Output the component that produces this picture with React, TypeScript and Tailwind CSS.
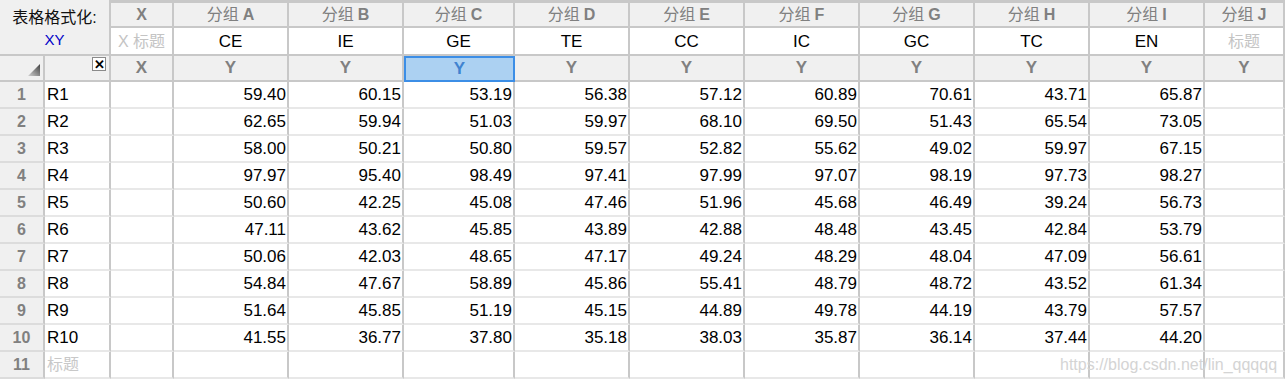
import React from "react";

const groups = ["A", "B", "C", "D", "E", "F", "G", "H", "I"];
const titles = ["CE", "IE", "GE", "TE", "CC", "IC", "GC", "TC", "EN"];

const data = [
  ["59.40", "60.15", "53.19", "56.38", "57.12", "60.89", "70.61", "43.71", "65.87"],
  ["62.65", "59.94", "51.03", "59.97", "68.10", "69.50", "51.43", "65.54", "73.05"],
  ["58.00", "50.21", "50.80", "59.57", "52.82", "55.62", "49.02", "59.97", "67.15"],
  ["97.97", "95.40", "98.49", "97.41", "97.99", "97.07", "98.19", "97.73", "98.27"],
  ["50.60", "42.25", "45.08", "47.46", "51.96", "45.68", "46.49", "39.24", "56.73"],
  ["47.11", "43.62", "45.85", "43.89", "42.88", "48.48", "43.45", "42.84", "53.79"],
  ["50.06", "42.03", "48.65", "47.17", "49.24", "48.29", "48.04", "47.09", "56.61"],
  ["54.84", "47.67", "58.89", "45.86", "55.41", "48.79", "48.72", "43.52", "61.34"],
  ["51.64", "45.85", "51.19", "45.15", "44.89", "49.78", "44.19", "43.79", "57.57"],
  ["41.55", "36.77", "37.80", "35.18", "38.03", "35.87", "36.14", "37.44", "44.20"],
];

const font = { fontFamily: '"Liberation Sans", "Noto Sans CJK SC", Arial, sans-serif' };

const head = "bg-[#f0f0f0] border-r-2 border-b-2 border-[#c8c8c8] flex items-center justify-center";
const cell = "border-r-2 border-b-2 border-r-[#c8c8c8] border-b-[#e8e8e8] flex items-center";

function Corner() {
  return (
    <svg width="12" height="12" viewBox="0 0 12 12" className="absolute right-[3px] bottom-[4px]">
      <defs>
        <linearGradient id="tri" x1="0" y1="1" x2="1" y2="0">
          <stop offset="0" stopColor="#d0d0d0" />
          <stop offset="1" stopColor="#404040" />
        </linearGradient>
      </defs>
      <polygon points="12,0 12,12 0,12" fill="url(#tri)" />
    </svg>
  );
}

export default function App() {
  return (
    <div className="relative w-[1285px] h-[379px] overflow-hidden bg-white" style={font}>
      <div className="grid grid-cols-[45px_66px_63px_115px_115px_111px_115px_115px_115px_115px_115px_115px_80px] grid-rows-[28px_28px_26px_repeat(11,27px)]">
        {/* table format */}
        <div className="col-span-2 row-span-2 bg-[#f0f0f0] border-r-2 border-b-2 border-[#c8c8c8] flex flex-col items-center pt-[8px]">
          <span className="text-[16px] leading-[20px] text-[#111]">表格格式化:</span>
          <span className="text-[15px] leading-[18px] text-[#0000c8] mt-[3px]">XY</span>
        </div>

        {/* row 1: group titles */}
        <div className={`${head} border-t-[3px] text-[16px] font-bold text-[#808080]`}>X</div>
        {groups.map((g) => (
          <div key={g} className={`${head} border-t-[3px] text-[16px] text-[#808080]`}>
            分组 <span className="font-bold ml-[4px]">{g}</span>
          </div>
        ))}
        <div className={`${head} border-t-[3px] text-[16px] text-[#808080]`}>
          分组 <span className="font-bold ml-[4px]">J</span>
        </div>

        {/* row 2: column titles */}
        <div className="border-r-2 border-b-2 border-[#c8c8c8] bg-white flex items-center justify-center pt-[2px] text-[16px] text-[#c4c4c4]">X 标题</div>
        {titles.map((t) => (
          <div key={t} className="border-r-2 border-b-2 border-[#c8c8c8] bg-white flex items-center justify-center pt-[2px] text-[17px] text-black">
            {t}
          </div>
        ))}
        <div className="border-r-2 border-b-2 border-[#c8c8c8] bg-white flex items-center justify-center pt-[2px] text-[16px] text-[#c4c4c4]">标题</div>

        {/* row 3: X / Y */}
        <div className={`${head} relative`}>
          <Corner />
        </div>
        <div className={`${head} relative`}>
          <div className="absolute right-[3px] top-[1px] w-[14px] h-[14px] border border-[#8a8a8a] bg-white flex items-center justify-center">
            <span className="text-[13px] leading-none font-bold text-black">✕</span>
          </div>
        </div>
        <div className={`${head} text-[17px] font-bold text-[#808080]`}>X</div>
        {groups.map((g) =>
          g === "C" ? (
            <div key={g} className="bg-[#acd1f2] border-2 border-[#3c8ee6] flex items-center justify-center text-[17px] font-bold text-[#3f83d0]">
              Y
            </div>
          ) : (
            <div key={g} className={`${head} text-[17px] font-bold text-[#808080]`}>Y</div>
          )
        )}
        <div className={`${head} text-[17px] font-bold text-[#808080]`}>Y</div>

        {/* data rows */}
        {data.map((row, i) => (
          <React.Fragment key={i}>
            <div className="bg-[#f0f0f0] border-r-2 border-b-2 border-r-[#c8c8c8] border-b-[#dcdcdc] flex items-center justify-center text-[16px] font-bold text-[#808080]">
              {i + 1}
            </div>
            <div className={`${cell} pl-[2px] text-[17px] text-black`}>R{i + 1}</div>
            <div className={cell}></div>
            {row.map((v, j) => (
              <div key={j} className={`${cell} justify-end pr-[1px] text-[17px] text-black`}>
                {v}
              </div>
            ))}
            <div className={cell}></div>
          </React.Fragment>
        ))}

        {/* row 11 */}
        <div className="bg-[#f0f0f0] border-r-2 border-b-2 border-r-[#c8c8c8] border-b-[#dcdcdc] flex items-center justify-center text-[16px] font-bold text-[#808080]">
          11
        </div>
        <div className={`${cell} pl-[2px] text-[16px] text-[#c8c8c8]`}>标题</div>
        {Array.from({ length: 11 }).map((_, k) => (
          <div key={k} className={cell}></div>
        ))}
      </div>

      <div className="absolute left-[1060px] top-[353px] text-[16px] text-[#d4d4d4]">
        https://blog.csdn.net/lin_qqqqq
      </div>
    </div>
  );
}
